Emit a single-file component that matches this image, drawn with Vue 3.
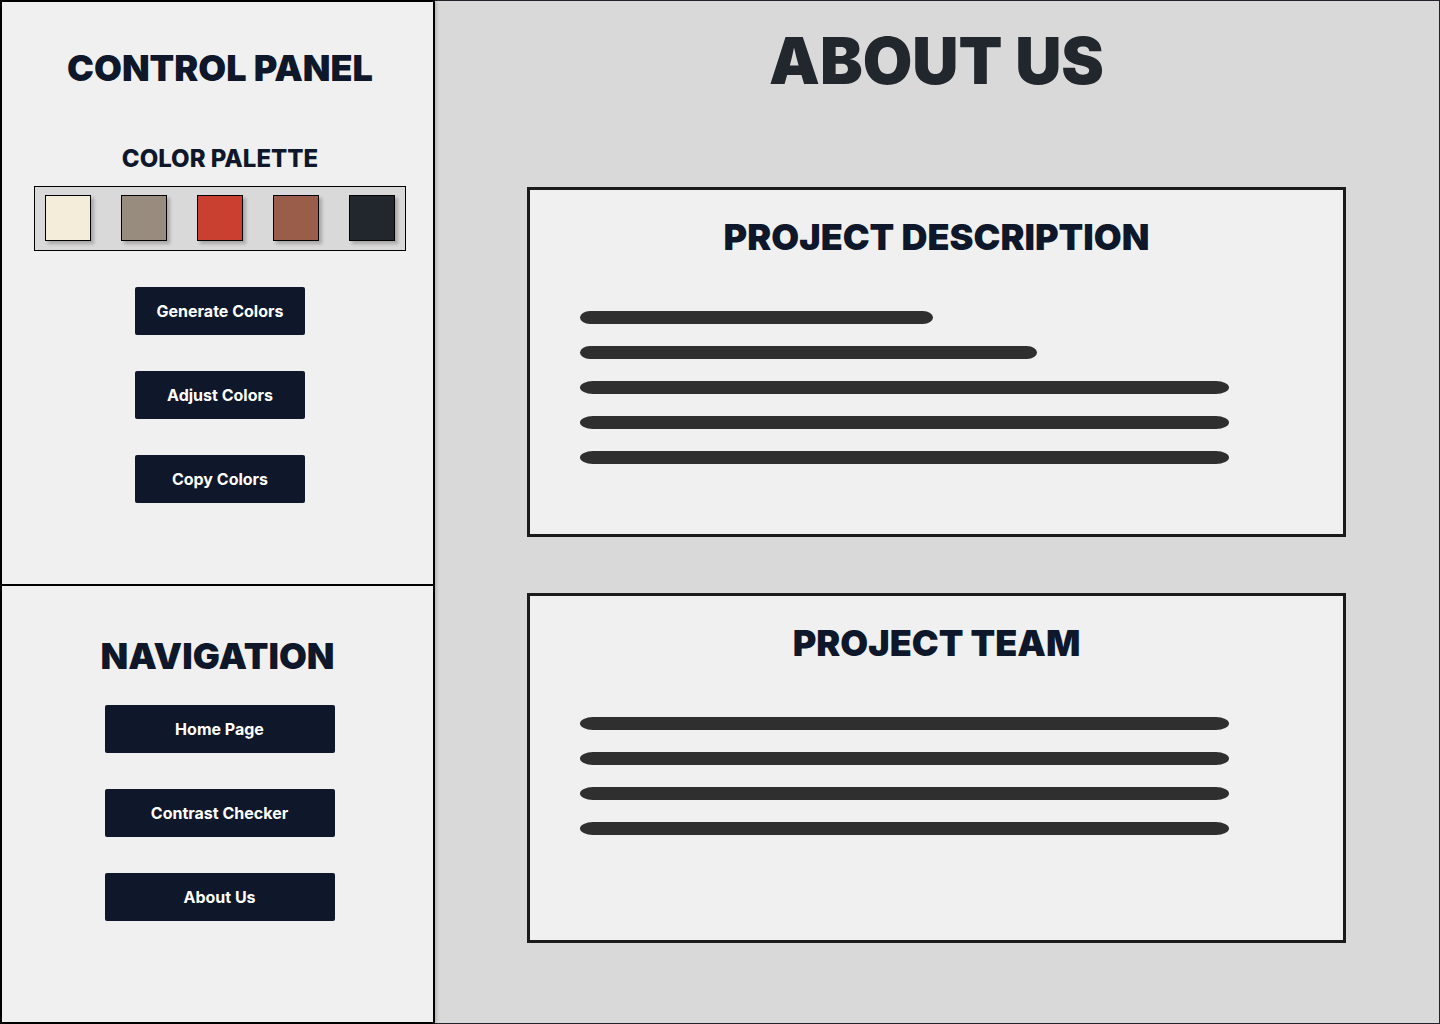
<script setup>
const palette = ['#f4edda', '#988c7f', '#c94031', '#9a5d49', '#22272e']
const actions = ['Generate Colors', 'Adjust Colors', 'Copy Colors']
const pages = [
  { label: 'Home Page', href: '#home' },
  { label: 'Contrast Checker', href: '#contrast' },
  { label: 'About Us', href: '#about' },
]
const cards = [
  { title: 'PROJECT DESCRIPTION', lines: [353, 457, 649, 649, 649] },
  { title: 'PROJECT TEAM', lines: [649, 649, 649, 649] },
]
</script>

<template>
  <div class="page">
    <aside class="sidebar">
      <section class="panel controls">
        <h2 class="title">CONTROL PANEL</h2>
        <h3 class="subtitle">COLOR PALETTE</h3>
        <div class="palette">
          <button
            v-for="color in palette"
            :key="color"
            type="button"
            class="swatch"
            :aria-label="color"
            :style="{ backgroundColor: color }"
          ></button>
        </div>
        <div class="stack">
          <button v-for="action in actions" :key="action" type="button" class="btn">{{ action }}</button>
        </div>
      </section>

      <section class="panel navigation">
        <h2 class="title">NAVIGATION</h2>
        <nav class="stack links">
          <a v-for="page in pages" :key="page.label" :href="page.href" class="btn wide">{{ page.label }}</a>
        </nav>
      </section>
    </aside>

    <main class="content">
      <h1 class="headline">ABOUT US</h1>
      <section v-for="card in cards" :key="card.title" class="card">
        <h2 class="title">{{ card.title }}</h2>
        <div class="lines">
          <div v-for="(width, i) in card.lines" :key="i" class="line" :style="{ width: width + 'px' }"></div>
        </div>
      </section>
    </main>
  </div>
</template>

<style>
body {
  margin: 0;
  background: #d9d9d9;
}
</style>

<style scoped>
.page {
  display: grid;
  grid-template-columns: minmax(0, 435fr) minmax(0, 1005fr);
  min-height: 100vh;
  font-family: Inter, "Liberation Sans", sans-serif;
  color: #0f172a;
}

.page * {
  box-sizing: border-box;
}

.sidebar {
  position: relative;
  display: flex;
  flex-direction: column;
  border: 2px solid #000;
  background: #f0f0f0;
  box-shadow: 1px 0 4px rgba(34, 24, 28, 0.25);
}

.controls {
  min-height: 584px;
  padding: 46px 27px 48px 32px;
  border-bottom: 2px solid #000;
}

.navigation {
  flex: 1;
  padding: 50px 0;
}

.title,
.subtitle,
.headline {
  margin: 0;
  text-align: center;
}

.title {
  font-size: 36px;
  line-height: 40px;
  font-weight: 900;
}

.subtitle {
  margin-top: 55px;
  font-size: 24px;
  line-height: 32px;
  font-weight: 800;
}

.palette {
  display: flex;
  justify-content: space-between;
  margin-top: 11px;
  padding: 8px 10px 9px;
  border: 1px solid #000;
  background: #d9d9d9;
}

.swatch {
  width: 46px;
  height: 46px;
  padding: 0;
  border: 1px solid #000;
  border-radius: 0;
  box-shadow: 3px 3px 3px rgba(34, 24, 28, 0.25);
}

.stack {
  display: flex;
  flex-direction: column;
  align-items: center;
  gap: 36px;
  margin-top: 36px;
}

.links {
  margin-top: 29px;
  padding-left: 4px;
}

.btn {
  display: flex;
  align-items: center;
  justify-content: center;
  width: 170px;
  height: 48px;
  padding: 0;
  border: 0;
  border-radius: 2px;
  background: #0f172a;
  color: #fff;
  font-family: inherit;
  font-size: 16px;
  line-height: 24px;
  font-weight: 700;
  text-decoration: none;
  cursor: pointer;
}

.btn.wide {
  width: 230px;
}

.content {
  display: flex;
  flex-direction: column;
  gap: 56px;
  padding: 20px 93px 80px 92px;
  border: 1px solid #22222a;
  border-left: 0;
  background: #d9d9d9;
}

.headline {
  margin-bottom: 30px;
  color: #22272e;
  font-size: 64px;
  line-height: 80px;
  font-weight: 900;
}

.card {
  display: flex;
  flex-direction: column;
  min-height: 350px;
  padding: 27px 0 68px;
  border: 3px solid #1b1b1b;
  background: #f0f0f0;
}

.lines {
  display: flex;
  flex-direction: column;
  gap: 22px;
  margin: 54px 60px 0 50px;
}

.line {
  max-width: 100%;
  height: 13px;
  border-radius: 2% / 50%;
  background: #2f2f2f;
}

.line:nth-child(1):nth-last-child(5),
.line:nth-child(2):nth-last-child(4) {
  border-radius: 10px / 50%;
}

@media (max-width: 1100px) {
  .page {
    grid-template-columns: minmax(0, 1fr);
  }

  .content {
    padding: 20px 24px 48px;
    border-left: 1px solid #22222a;
  }
}
</style>
